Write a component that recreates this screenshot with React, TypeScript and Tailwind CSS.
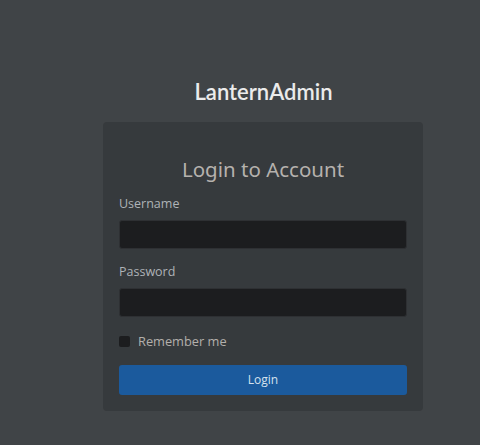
export default function App() {
    return (
        <div className="min-h-[445px] bg-[#404447] pl-[103px] pt-[78px]">
            <div className="w-[320px]">
                {/* Brand */}
                <h1 className="text-center text-[22px] font-semibold leading-[28px] text-[#ebebeb] font-['Lato',sans-serif] pl-[1px]">
                    LanternAdmin
                </h1>

                {/* Card */}
                <div className="mt-[16px] rounded-[4px] bg-[#363a3d] px-[16px] pt-[33px] pb-[16px] font-['Open_Sans',sans-serif]">
                    <h2 className="text-center text-[20.5px] leading-[28px] text-[#b5b1ad] font-['Noto_Sans',sans-serif]">
                        Login to Account
                    </h2>

                    <form className="mt-[12px]" onSubmit={(e) => e.preventDefault()}>
                        <label className="block text-[12.5px] leading-[18px] text-[#aeb3b7]">Username</label>
                        <input
                            type="text"
                            className="mt-[7px] block h-[29px] w-full rounded-[3px] border border-[#2e3033] bg-[#1c1d1f] px-2 text-sm text-gray-200 outline-none"
                        />

                        <label className="mt-[14px] block text-[12.5px] leading-[18px] text-[#aeb3b7]">Password</label>
                        <input
                            type="password"
                            className="mt-[7px] block h-[29px] w-full rounded-[3px] border border-[#2e3033] bg-[#1c1d1f] px-2 text-sm text-gray-200 outline-none"
                        />

                        <label className="mt-[15px] flex items-center gap-[8px] text-[12.8px] leading-[18px] text-[#b3afab]">
                            <span className="block h-[11px] w-[11px] rounded-[2px] bg-[#1c1d1f]" />
                            Remember me
                        </label>

                        <button
                            type="submit"
                            className="mt-[15px] block h-[30px] w-full rounded-[3px] bg-[#1b5a9d] text-[12px] text-[#d5e2ee]"
                        >
                            Login
                        </button>
                    </form>
                </div>
            </div>
        </div>
    );
}
